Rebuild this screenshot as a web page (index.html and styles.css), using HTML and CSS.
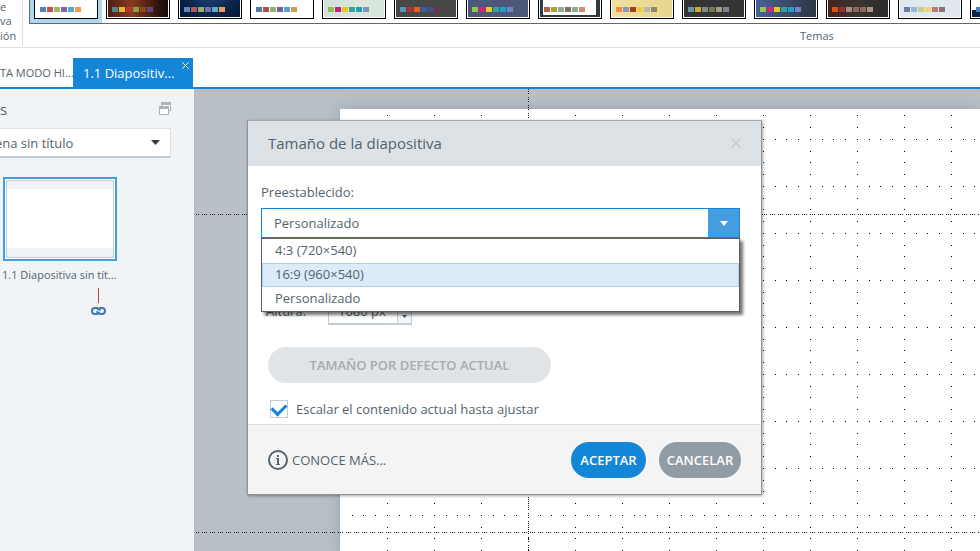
FILE: index.html
```html
<!DOCTYPE html>
<html lang="es">
<head>
  <meta charset="UTF-8" />
  <meta name="viewport" content="width=device-width, initial-scale=1.0" />
  <title>Tamaño de la diapositiva</title>
  <link rel="stylesheet" href="styles.css">
</head>
<body>
  <header class="ribbon">
    <div class="ribbon-group">
      <span>e</span>
      <span>va</span>
      <span class="group-name">ión</span>
    </div>
    <div class="themes">
      <div class="gallery" id="gallery"></div>
      <p class="themes-name">Temas</p>
    </div>
  </header>

  <nav class="tabs">
    <button class="tab" type="button">TA MODO HI...</button>
    <div class="tab active">
      <span>1.1 Diapositiv...</span>
      <button class="tab-close" type="button" aria-label="Cerrar">
        <svg width="7" height="7" viewBox="0 0 7 7"><path d="M.5.5l6 6M6.5.5l-6 6" stroke="#fff" fill="none"/></svg>
      </button>
    </div>
  </nav>

  <main class="workspace">
    <aside class="sidebar">
      <div class="sidebar-head">
        <h2>s</h2>
        <svg width="12" height="13" viewBox="0 0 12 13" shape-rendering="crispEdges">
          <path d="M2.5.5h9v8h-9z" fill="#fff" stroke="#aab4bb"/>
          <path d="M2 0h10v3H2z" fill="#aab4bb"/>
          <path d="M.5 4.500h9v8h-9z" fill="#fff" stroke="#aab4bb"/>
          <path d="M0 4h10v3H0z" fill="#aab4bb"/>
        </svg>
      </div>
      <div class="scene">
        <select aria-label="Escena">
          <option>ena sin título</option>
        </select>
        <svg width="9" height="5" viewBox="0 0 9 5"><path d="M0 0h9L4.500 5z" fill="#33393d"/></svg>
      </div>
      <button class="slide-thumb" type="button" aria-label="1.1 Diapositiva"><span></span></button>
      <p class="slide-name">1.1 Diapositiva sin tít...</p>
      <div class="slide-link">
        <i></i>
        <svg width="15" height="8" viewBox="0 0 15 8" fill="none" stroke="#4379b0" stroke-width="2">
          <path d="M8.500 5.200C7.600 6.600 6.800 7 5.500 7H4A3 3 0 0 1 4 1h1.500C7.500 1 8 2.800 9.500 3.500"/>
          <path d="M6.500 2.800C7.400 1.400 8.200 1 9.500 1H11a3 3 0 0 1 0 6H9.500C7.500 7 7 5.200 5.500 4.500"/>
        </svg>
      </div>
    </aside>

    <section class="canvas">
      <div class="slide">
        <svg class="grid" width="100%" height="100%" shape-rendering="crispEdges">
          <defs>
            <pattern id="dots" y="30" width="47" height="47" patternUnits="userSpaceOnUse">
              <path d="M0 0h1v1H0zM12 0h1v1h-1zM23 0h1v1h-1zM35 0h1v1h-1zM0 12h1v1H0zM0 23h1v1H0zM0 35h1v1H0z"/>
            </pattern>
          </defs>
          <rect x="1" width="100%" height="100%" fill="url(#dots)"/>
        </svg>
      </div>
      <div class="guide guide-h guide-top"></div>
      <div class="guide guide-h guide-bottom"></div>
      <div class="guide guide-v"></div>
    </section>
  </main>

  <form class="dialog" role="dialog" aria-labelledby="dialogTitle">
    <div class="dialog-head">
      <h1 id="dialogTitle">Tamaño de la diapositiva</h1>
      <button class="dialog-close" type="button" aria-label="Cerrar">
        <svg width="10" height="10" viewBox="0 0 10 10"><path d="M.7.7l8.600 8.600M9.300.7L.7 9.300" stroke="#cdcfd0" stroke-width="2" fill="none"/></svg>
      </button>
    </div>

    <div class="dialog-body">
      <label class="preset-label" for="preset">Preestablecido:</label>
      <div class="preset">
        <select id="preset">
          <option>Personalizado</option>
        </select>
        <span class="preset-arrow"><svg width="8" height="5" viewBox="0 0 8 5"><path d="M0 0h8L4 5z" fill="#fff"/></svg></span>
        <ul class="options" role="listbox">
          <li role="option">4:3 (720×540)</li>
          <li role="option" class="hovered">16:9 (960×540)</li>
          <li role="option">Personalizado</li>
        </ul>
      </div>

      <div class="size-row">
        <label for="height">Altura:</label>
        <div class="spin">
          <input id="height" type="text" value="1080 px">
          <span class="spin-arrow"><svg width="5" height="3" viewBox="0 0 5 3"><path d="M0 0h5L2.500 3z" fill="#4f5f69"/></svg></span>
        </div>
      </div>

      <button class="pill default-size" type="button" disabled>TAMAÑO POR DEFECTO ACTUAL</button>

      <label class="scale"><input type="checkbox" checked>Escalar el contenido actual hasta ajustar</label>
    </div>

    <div class="dialog-foot">
      <a class="learn" href="#">
        <svg width="20" height="20" viewBox="0 0 20 20">
          <circle cx="10" cy="10" r="9" fill="none" stroke="#53656f" stroke-width="2"/>
          <path d="M9 5h2v2H9zM8 8h3v6h1v1H8v-1h1V9H8z" fill="#53656f"/>
        </svg>
        CONOCE MÁS...
      </a>
      <button class="pill accept" type="button">ACEPTAR</button>
      <button class="pill cancel" type="button">CANCELAR</button>
    </div>
  </form>

  <script src="script.js"></script>
</body>
</html>
```
FILE: styles.css
```css
:root {
  --blue: #1486d8;
  --text: #53636d;
  --line: #c3ccd3;
}

* {
  box-sizing: border-box;
}

html, body {
  margin: 0;
  height: 100%;
  overflow: hidden;
}

body {
  display: flex;
  flex-direction: column;
  background: #fff;
  color: var(--text);
  font-family: "Open Sans", "Noto Sans", sans-serif;
  font-size: 13px;
  line-height: 18px;
}

h1, h2, p, ul {
  margin: 0;
  padding: 0;
  font-weight: 400;
}

button, input, select {
  font: inherit;
  color: inherit;
  margin: 0;
  padding: 0;
  border: none;
  background: none;
}

svg {
  display: block;
}

/* ribbon */
.ribbon {
  flex: none;
  display: flex;
  border-bottom: 1px solid #dfdfdf;
}

.ribbon-group {
  width: 23px;
  height: 45px;
  display: flex;
  flex-direction: column;
  border-right: 1px solid #d5dbe0;
  font-size: 11px;
  line-height: 14px;
}

.group-name {
  line-height: 16px;
}

.themes {
  flex: 1;
  min-width: 0;
  padding-left: 6px;
}

.gallery {
  height: 24px;
  display: flex;
  align-items: flex-end;
  overflow: hidden;
  border-left: 1px solid #666;
  border-bottom: 1px solid #666;
}

.theme {
  flex: none;
  width: 72px;
  height: 60px;
  padding: 0 4px 4px;
}

.theme.selected {
  background: #b0d5ee;
}

.theme-preview {
  height: 56px;
  display: flex;
  align-items: flex-end;
  gap: 1px;
  padding: 0 5px 6px;
  border: 1px solid #000;
  box-shadow: inset 0 0 0 1px #fff;
}

.theme-preview i {
  width: 6px;
  height: 5px;
}

.themes-name {
  height: 23px;
  padding-left: 771px;
  font-size: 11px;
  line-height: 24px;
}

/* tabs */
.tabs {
  flex: none;
  height: 41px;
  display: flex;
  align-items: flex-end;
  border-bottom: 2px solid var(--blue);
}

.tab {
  width: 73px;
  height: 29px;
  font-size: 11px;
  white-space: nowrap;
  text-align: left;
}

.tab.active {
  width: 120px;
  display: flex;
  justify-content: space-between;
  padding: 4px 4px 0 10px;
  background: var(--blue);
  color: #fff;
  font-size: 13px;
  line-height: 22px;
}

.tab-close {
  height: 7px;
}

/* sidebar */
.workspace {
  flex: 1;
  min-height: 0;
  display: flex;
}

.sidebar {
  flex: none;
  width: 195px;
  padding-right: 23px;
  background: #f0f4f7;
  border-right: 1px solid #aeb9c0;
  box-shadow: inset -5px 0 0 #f4f4f4;
}

.sidebar-head {
  height: 39px;
  display: flex;
  align-items: center;
  justify-content: space-between;
}

.sidebar-head h2 {
  font-size: 15px;
}

/* runs past the left edge of the window */
.scene {
  display: flex;
  align-items: center;
  height: 30px;
  margin-left: -6px;
  padding-right: 10px;
  background: #fff;
  border: 1px solid #dbe1e5;
  border-bottom: 2px solid var(--line);
}

.scene select {
  appearance: none;
  flex: 1;
  height: 100%;
}

.slide-thumb {
  display: block;
  width: 114px;
  height: 84px;
  margin: 19px 0 5px 3px;
  padding: 1px;
  border: 2px solid #429fde;
  background: #fff;
}

.slide-thumb span {
  display: block;
  height: 100%;
  border: 1px solid #c9cdcf;
  background: linear-gradient(#f0f4f7 8px, #fff 0 67px, #f0f4f7 0);
}

.slide-name {
  padding-left: 2px;
  font-size: 11px;
  white-space: nowrap;
}

.slide-link {
  display: flex;
  flex-direction: column;
  align-items: center;
  gap: 4px;
  width: 15px;
  margin: 4px 0 0 91px;
}

.slide-link i {
  width: 1px;
  height: 15px;
  background: #b8444a;
}

/* drawing area */
.canvas {
  position: relative;
  flex: 1;
  min-width: 0;
  padding: 20px 0 0 145px;
  overflow: hidden;
  background: #b8bfc6;
}

.slide {
  height: 100%;
  background: #fff;
  box-shadow: 0 0 12px rgba(90, 110, 120, 0.35);
}

.guide {
  position: absolute;
  --dash: #1c1a19 0 1px, transparent 0 2px, #1c1a19 0 3px, transparent 0 4px, #1c1a19 0 5px, transparent 0 8px;
}

.guide-h {
  left: -1px;
  right: 0;
  height: 1px;
  background: repeating-linear-gradient(90deg, var(--dash));
}

.guide-top {
  top: 125px;
}

.guide-bottom {
  top: 443px;
}

.guide-v {
  top: 0;
  bottom: 0;
  left: 333px;
  width: 1px;
  background: repeating-linear-gradient(180deg, var(--dash));
}

/* dialog */
.dialog {
  position: absolute;
  top: 120px;
  left: 247px;
  width: 515px;
  background: #fff;
  border: 1px solid #8d9295;
  border-top-color: #a9acae;
  box-shadow: 1px 1px 3px rgba(0, 0, 0, 0.35);
}

.dialog-head {
  height: 45px;
  display: flex;
  align-items: center;
  justify-content: space-between;
  padding: 0 20px 2px;
  background: #dde2e6;
}

.dialog-head h1 {
  font-size: 15px;
}

.dialog-body {
  padding: 17px 21px 6px 13px;
  border-bottom: 1px solid #dbe1e5;
}

.preset-label {
  display: block;
  margin-bottom: 7px;
}

.preset {
  position: relative;
  display: flex;
  height: 30px;
  border: 1px solid var(--blue);
}

.preset select {
  appearance: none;
  flex: 1;
  padding-left: 12px;
}

.preset-arrow {
  width: 31px;
  display: flex;
  align-items: center;
  justify-content: center;
  background: #459ddf;
}

.options {
  position: absolute;
  z-index: 1;
  top: 29px;
  left: -1px;
  right: -1px;
  list-style: none;
  background: #fff;
  border: 1px solid #5e5e5e;
  box-shadow: 3px 3px 3px rgba(0, 0, 0, 0.55);
}

.options li {
  height: 24px;
  padding-left: 12px;
  border: 1px solid transparent;
  line-height: 20px;
}

.options .hovered {
  background: #dbebf8;
  border-color: #a9d2ee;
}

.size-row {
  display: flex;
  align-items: center;
  margin: 59px 0 22px 5px;
}

.size-row label {
  width: 62px;
}

.spin {
  width: 84px;
  height: 28px;
  display: flex;
  border: 1px solid var(--line);
  border-bottom-width: 2px;
}

.spin input {
  flex: 1;
  min-width: 0;
  padding-left: 9px;
}

.spin-arrow {
  width: 14px;
  display: flex;
  align-items: flex-end;
  justify-content: center;
  padding-bottom: 5px;
  background: #f4f6f7;
  border-left: 1px solid var(--line);
}

.pill {
  height: 36px;
  border-radius: 18px;
  font-weight: 600;
  font-size: 13px;
}

.default-size {
  display: block;
  width: 283px;
  margin-left: 7px;
  background: #e0e4e7;
  color: #a9abad;
}

.scale {
  display: flex;
  align-items: center;
  gap: 8px;
  margin: 17px 0 0 9px;
}

.scale input {
  appearance: none;
  width: 18px;
  height: 18px;
  border: 1px solid var(--line);
  display: grid;
  place-items: center;
}

.scale input:checked::before {
  content: "";
  width: 11px;
  height: 7px;
  margin-top: -3px;
  border: solid var(--blue);
  border-width: 0 0 3px 3px;
  transform: rotate(-45deg);
}

.dialog-foot {
  display: flex;
  align-items: center;
  gap: 13px;
  padding: 17px 20px 16px;
  background: #f4f4f4;
}

.learn {
  flex: 1;
  display: flex;
  align-items: center;
  gap: 4px;
  color: inherit;
  text-decoration: none;
  font-size: 13px;
}

.accept {
  width: 75px;
  background: var(--blue);
  color: #fff;
}

.cancel {
  width: 82px;
  background: #929ca5;
  color: #fff;
}
```
FILE: script.js
```js
const gallery = document.getElementById("gallery");

// preview background followed by its six palette colours
const themes = [
  ["#fff", "#4f81bd", "#c0504d", "#9bbb59", "#8064a2", "#4bacc6", "#f79646"],
  ["linear-gradient(90deg, #4a1f12, #8a3a22 40%, #2a120c 85%, #160a07)", "#4b8a8c", "#f2b33d", "#c0322a", "#8ea13a", "#8a4a12", "#5a4a78"],
  ["radial-gradient(#1f4a80, #0b2448 60%, #051430)", "#5b86c4", "#b05a5a", "#94b070", "#7c6ca8", "#58aecb", "#ee9c5c"],
  ["#fff", "#5079a8", "#a8524c", "#94b070", "#75609a", "#5aa3c4", "#cf9a58"],
  ["linear-gradient(90deg, #cddfdd, #dfe6dc 60%, #d3e4da)", "#8fc04c", "#c8207c", "#f0c020", "#3ea09c", "#1fa0b8", "#7a94c4"],
  ["#474747", "#4a9ab4", "#b8302c", "#e0601f", "#3a60a0", "#44508c", "#6a3440"],
  ["#4d5878", "#8fc850", "#d8207c", "#f0c828", "#38a09c", "#1fa0d4", "#6c88c8"],
  ["linear-gradient(#0000 51px, #2f3a42 0), linear-gradient(90deg, #2f3a42 4px, #fff 0 57px, #2f3a42 0)", "#b8604a", "#a8a434", "#8cac9c", "#7c7060", "#8cac98", "#c8906c"],
  ["linear-gradient(90deg, #efe0a0, #e6d68c)", "#f08c44", "#8498c0", "#a43c14", "#f8c83c", "#b8b8b0", "#8c8868"],
  ["#343434", "#6898a8", "#c8b030", "#808894", "#6c7c54", "#a09c80", "#808494"],
  ["linear-gradient(90deg, #4a6498, #3a4660 60%, #2c3444)", "#8fcc54", "#d8207c", "#e8c820", "#38a09c", "#1fa0d0", "#6c88c8"],
  ["linear-gradient(90deg, #47231e, #3a3432 50%, #2c2a2a)", "#d85014", "#98302c", "#a09488", "#8c6858", "#8c6c60", "#a89880"],
  ["#dfe8ec", "#6c7ca4", "#98b4d0", "#c0d484", "#f4d07c", "#c07874", "#8c7474"],
  ["linear-gradient(#fff 46px, #0d2448 0)", "#4f81bd", "#c0504d", "#9bbb59", "#8064a2", "#4bacc6", "#f79646"]
];

themes.forEach(([background, ...colors], index) => {
  const theme = document.createElement("div");
  theme.className = index === 0 ? "theme selected" : "theme";

  const preview = document.createElement("div");
  preview.className = "theme-preview";
  preview.style.background = background;

  colors.forEach(color => {
    const swatch = document.createElement("i");
    swatch.style.background = color;
    preview.appendChild(swatch);
  });

  theme.appendChild(preview);
  gallery.appendChild(theme);
});
```
